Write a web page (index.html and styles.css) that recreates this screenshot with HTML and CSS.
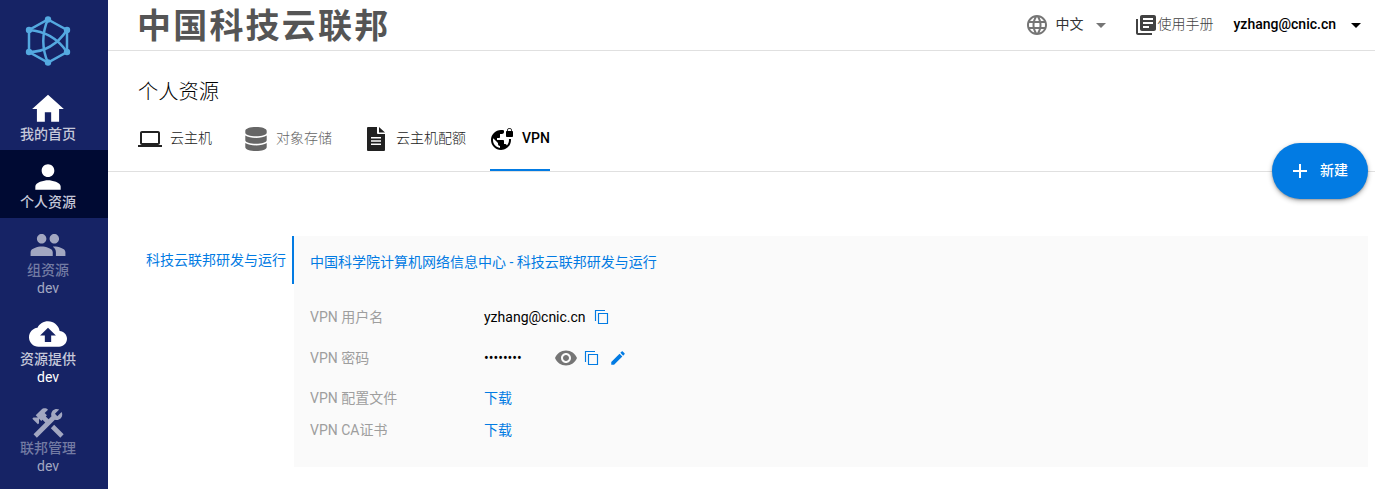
FILE: index.html
```html
<!DOCTYPE html>
<html lang="zh-CN">
<head>
<meta charset="utf-8">
<title>个人资源</title>
<link rel="stylesheet" href="styles.css">
</head>
<body>
<div class="app">
  <nav class="sidebar">
    <svg class="brand" viewBox="0 0 48 52">
      <path d="M24 4.500 43 15v22L24 47.500 5 37V15z"/>
      <path d="M5 15c16 1 29 9 38 22M24 4c-6 14-6 30 0 44M5 37c15 0 28-7 38-22"/>
      <g class="nodes"><circle cx="24" cy="4.500" r="3.200"/><circle cx="43" cy="15" r="3.200"/><circle cx="43" cy="37" r="3.200"/><circle cx="24" cy="47.500" r="3.200"/><circle cx="5" cy="37" r="3.200"/><circle cx="5" cy="15" r="3.200"/></g>
    </svg>
    <a class="nav-item"><svg viewBox="0 0 24 24"><path d="M10 20v-6h4v6h5v-8h3L12 3 2 12h3v8z"/></svg><span>我的首页</span></a>
    <a class="nav-item active"><svg viewBox="0 0 24 24"><path d="M12 12c2.210 0 4-1.790 4-4s-1.790-4-4-4-4 1.790-4 4 1.790 4 4 4zm0 2c-2.670 0-8 1.340-8 4v2h16v-2c0-2.660-5.330-4-8-4z"/></svg><span>个人资源</span></a>
    <a class="nav-item tall dim"><svg viewBox="0 0 24 24"><path d="M16 11c1.660 0 2.990-1.340 2.990-3S17.660 5 16 5s-3 1.340-3 3 1.340 3 3 3zm-8 0c1.660 0 2.990-1.340 2.990-3S9.660 5 8 5 5 6.340 5 8s1.340 3 3 3zm0 2c-2.330 0-7 1.170-7 3.500V19h14v-2.500c0-2.330-4.670-3.500-7-3.500zm8 0c-.29 0-.62.02-.97.05 1.160.84 1.970 1.970 1.970 3.450V19h6v-2.500c0-2.330-4.670-3.500-7-3.500z"/></svg><span>组资源</span><b>dev</b></a>
    <a class="nav-item tall"><svg viewBox="0 0 24 24"><path d="M19.350 10.040C18.670 6.590 15.640 4 12 4 9.110 4 6.600 5.640 5.350 8.040 2.340 8.360 0 10.910 0 14c0 3.310 2.690 6 6 6h13c2.760 0 5-2.240 5-5 0-2.640-2.050-4.780-4.650-4.960zM14 13v4h-4v-4H7l5-5 5 5h-3z"/></svg><span>资源提供</span><b>dev</b></a>
    <a class="nav-item tall dim"><svg viewBox="0 0 24 24"><path d="M13.780 15.300 19.780 21.300 21.890 19.140 15.890 13.140zM17.500 10.100C17.110 10.100 16.690 10.050 16.360 9.910L4.970 21.250 2.860 19.140 10.270 11.740 8.500 9.960 7.780 10.660 6.330 9.250V12.110L5.630 12.810 2.110 9.250 2.810 8.550H5.620L4.220 7.140 7.780 3.580C8.950 2.410 10.830 2.410 12 3.580L9.890 5.740 11.300 7.140 10.590 7.850 12.380 9.630 14.200 7.750C14.060 7.420 14 7 14 6.630 14 4.660 15.560 3.110 17.500 3.110 18.090 3.110 18.610 3.250 19.080 3.530L16.410 6.200 17.910 7.700 20.580 5.030C20.860 5.500 21 6 21 6.630 21 8.550 19.450 10.100 17.500 10.100z"/></svg><span>联邦管理</span><b>dev</b></a>
  </nav>
  <div class="page">
    <header class="topbar">
      <div class="wordmark">中国科技云联邦</div>
      <div class="lang">
        <svg class="globe" viewBox="0 0 24 24"><path d="M11.990 2C6.470 2 2 6.480 2 12s4.470 10 9.990 10C17.520 22 22 17.520 22 12S17.520 2 11.990 2zm6.930 6h-2.950c-.32-1.250-.78-2.450-1.380-3.560 1.840.63 3.370 1.910 4.330 3.560zM12 4.040c.83 1.200 1.480 2.530 1.910 3.960h-3.820c.43-1.430 1.080-2.760 1.910-3.960zM4.260 14C4.100 13.360 4 12.690 4 12s.1-1.360.26-2h3.380c-.08.66-.14 1.320-.14 2s.06 1.340.14 2H4.260zm.82 2h2.950c.32 1.250.78 2.450 1.380 3.560-1.840-.63-3.370-1.900-4.330-3.560zm2.950-8H5.080c.96-1.660 2.490-2.930 4.330-3.560C8.810 5.550 8.350 6.750 8.030 8zM12 19.960c-.83-1.200-1.480-2.530-1.910-3.960h3.820c-.43 1.430-1.080 2.760-1.910 3.960zM14.340 14H9.660c-.09-.66-.16-1.320-.16-2s.07-1.350.16-2h4.680c.09.65.16 1.320.16 2s-.07 1.340-.16 2zm.25 5.560c.6-1.110 1.060-2.310 1.380-3.560h2.950c-.96 1.650-2.490 2.930-4.330 3.560zM16.360 14c.08-.66.14-1.320.14-2s-.06-1.340-.14-2h3.380c.16.64.26 1.310.26 2s-.1 1.360-.26 2h-3.380z"/></svg>
        <span>中文</span>
        <svg class="caret" viewBox="0 0 24 24"><path d="M7 10l5 5 5-5z"/></svg>
      </div>
      <div class="manual">
        <svg viewBox="0 0 24 24"><path d="M4 6H2v14c0 1.100.9 2 2 2h14v-2H4V6zm16-4H8c-1.100 0-2 .9-2 2v12c0 1.100.9 2 2 2h12c1.100 0 2-.9 2-2V4c0-1.100-.9-2-2-2zm-1 9H9V9h10v2zm-4 4H9v-2h6v2zm4-8H9V5h10v2z"/></svg>
        <span>使用手册</span>
      </div>
      <div class="account"><span>yzhang@cnic.cn</span><svg viewBox="0 0 24 24"><path d="M7 10l5 5 5-5z"/></svg></div>
    </header>
    <section class="heading">
      <h1>个人资源</h1>
      <div class="tabs">
        <a class="tab"><svg viewBox="0 0 24 24"><path d="M20 18c1.100 0 1.990-.9 1.990-2L22 6c0-1.100-.9-2-2-2H4c-1.100 0-2 .9-2 2v10c0 1.100.9 2 2 2H0v2h24v-2h-4zM4 6h16v10H4V6z"/></svg><span>云主机</span></a>
        <a class="tab muted"><svg viewBox="0 0 24 24"><path d="M1.300 4v1.800c0 2.200 4.800 3.500 10.700 3.500s10.700-1.300 10.700-3.500V4C22.700 1.500 18 0 12 0S1.300 1.500 1.300 4zM1.300 8.600v4.600c0 2.100 4.800 3.500 10.700 3.500s10.700-1.400 10.700-3.500V8.600C20.500 10.200 16.200 10.900 12 10.900S3.500 10.200 1.300 8.600zM1.300 16v4.300C1.300 22.600 6.100 24 12 24s10.700-1.400 10.700-3.700V16c-2.200 1.600-6.500 2.400-10.700 2.400S3.500 17.600 1.300 16z"/></svg><span>对象存储</span></a>
        <a class="tab quota"><svg viewBox="0 0 24 24"><path d="M13 0H4a1 1 0 0 0-1 1v22a1 1 0 0 0 1 1h16a1 1 0 0 0 1-1V7h-7a1 1 0 0 1-1-1zM15 0v5.500h6zM7 10h10v1.500H7zm0 3.300h10v1.500H7zm0 3.200h10V18H7z" fill-rule="evenodd"/></svg><span>云主机配额</span></a>
        <a class="tab current"><svg viewBox="0 0 24 24"><path d="M22 4v-.5C22 2.120 20.880 1 19.500 1S17 2.120 17 3.500V4c-.55 0-1 .45-1 1v4c0 .55.45 1 1 1h5c.55 0 1-.45 1-1V5c0-.55-.45-1-1-1zm-.8 0h-3.400v-.5c0-.94.76-1.700 1.700-1.700s1.700.76 1.700 1.700V4zm-2.280 8c.04.33.08.66.08 1 0 2.080-.8 3.970-2.100 5.390-.26-.81-1-1.390-1.900-1.390h-1v-3c0-.55-.45-1-1-1H7v-2h2c.55 0 1-.45 1-1V7h2c1.100 0 2-.9 2-2V3.460c-.95-.3-1.950-.46-3-.46C5.480 3 1 7.480 1 13s4.480 10 10 10 10-4.480 10-10c0-.34-.02-.67-.05-1h-2.030zM10 20.930c-3.950-.49-7-3.850-7-7.930 0-.62.08-1.210.21-1.790L8 16v1c0 1.100.9 2 2 2v1.930z"/></svg><span>VPN</span></a>
      </div>
      <button class="create"><svg viewBox="0 0 24 24"><path d="M19 13h-6v6h-2v-6H5v-2h6V5h2v6h6v2z"/></svg><span>新建</span></button>
    </section>
    <main class="content">
      <div class="orgs"><a class="org">科技云联邦研发与运行</a></div>
      <div class="panel">
        <h2>中国科学院计算机网络信息中心 - 科技云联邦研发与运行</h2>
        <div class="row user"><label>VPN 用户名</label><span>yzhang@cnic.cn</span><svg class="copy" viewBox="0 0 16 16"><path d="M1.500 12V1.500H11M4.500 4.500h9v10h-9z"/></svg></div>
        <div class="row secret"><label>VPN 密码</label><span class="dots">••••••••</span><svg class="eye" viewBox="0 0 24 24"><path d="M12 4.500C7 4.500 2.730 7.610 1 12c1.730 4.390 6 7.500 11 7.500s9.270-3.110 11-7.500c-1.730-4.390-6-7.500-11-7.500zM12 17c-2.760 0-5-2.240-5-5s2.240-5 5-5 5 2.240 5 5-2.240 5-5 5zm0-8c-1.660 0-3 1.340-3 3s1.340 3 3 3 3-1.340 3-3-1.340-3-3-3z"/></svg><svg class="copy" viewBox="0 0 16 16"><path d="M1.500 12V1.500H11M4.500 4.500h9v10h-9z"/></svg><svg class="edit" viewBox="0 0 24 24"><path d="M3 17.250V21h3.750L17.810 9.940l-3.750-3.750L3 17.250zM20.710 7.040c.39-.39.39-1.020 0-1.410l-2.340-2.340c-.39-.39-1.020-.39-1.410 0l-1.830 1.830 3.750 3.750 1.830-1.830z"/></svg></div>
        <div class="row"><label>VPN 配置文件</label><a>下载</a></div>
        <div class="row"><label>VPN CA证书</label><a>下载</a></div>
      </div>
    </main>
  </div>
</div>
</body>
</html>
```

FILE: styles.css
```css
* { box-sizing: border-box; }
body { margin: 0; font: 14px/20px Roboto, "Noto Sans CJK SC", sans-serif; color: #000; background: #fff; overflow: hidden; }
svg { display: block; fill: currentColor; flex: none; }
.app { display: flex; height: 489px; }
.sidebar { width: 108px; flex: none; background: #162365; color: #fff; display: flex; flex-direction: column; overflow: hidden; }
.brand { width: 48px; height: 52px; margin: 15px 0 15px 24px; flex: none; fill: none; stroke: #54a9e0; stroke-width: 2.5; }
.nodes { fill: #54a9e0; stroke: none; }
.nav-item { height: 68px; flex: none; padding: 8px 12px 0 0; display: flex; flex-direction: column; align-items: center; line-height: 18px; }
.nav-item svg { width: 38px; height: 38px; margin-bottom: -3px; }
.nav-item span { color: #c5c8d9; font-weight: 500; }
.nav-item b { font-weight: 400; }
.nav-item.tall { height: 89px; }
.nav-item.active { background: #000a33; }
.nav-item.dim svg { color: #a2a7c1; }
.nav-item.dim span { color: #737ba3; }
.nav-item.dim b { color: #a2a7c1; }
.page { flex: 1; min-width: 0; }
.topbar { height: 51px; border-bottom: 1px solid #e0e0e0; display: flex; align-items: center; padding-left: 29px; }
.wordmark { font-size: 34px; line-height: 48px; padding-top: 2px; letter-spacing: 2.2px; font-weight: 700; color: #555; margin-right: auto; }
.lang { display: flex; align-items: center; margin-right: 21px; color: #333; }
.globe { width: 24px; height: 24px; color: #757575; margin-right: 7px; }
.caret { width: 24px; height: 24px; color: #757575; margin-left: 5px; }
.manual { display: flex; align-items: center; margin-right: 20px; color: #424242; font-weight: 300; }
.manual svg { width: 24px; height: 24px; }
.account { display: flex; align-items: center; font-weight: 500; gap: 8px; padding-right: 7px; }
.account svg { width: 24px; height: 24px; }
.account span, .manual span, .lang span { position: relative; top: -1px; }
.heading { position: relative; height: 121px; border-bottom: 1px solid #e0e0e0; padding: 27px 30px 0; display: flex; flex-direction: column; }
h1 { margin: 0; font-size: 20.3px; line-height: 28px; font-weight: 300; }
.tabs { display: flex; margin-top: 1px; height: 64px; }
.tab { display: flex; height: 64px; align-items: center; gap: 8px; color: #212121; margin-right: 32px; font-weight: 300; }
.tab svg { width: 24px; height: 24px; }
.tab span { padding-bottom: 2px; }
.tab.muted { color: #666; }
.tab.quota { margin-right: 24px; }
.tab.current { color: #000; font-weight: 500; border-bottom: 2px solid #027be3; padding-top: 2px; }
.create { position: absolute; right: 7px; bottom: -28px; width: 96px; height: 56px; border: 0; border-radius: 28px; background: #027be3; color: #fff; display: flex; align-items: center; padding: 0 16px; gap: 8px; font: 500 14px/20px Roboto, "Noto Sans CJK SC", sans-serif; box-shadow: 0 2px 5px rgba(0,0,0,.3), 0 1px 2px rgba(0,0,0,.2); }
.create svg { width: 24px; height: 24px; }
.create span { padding-bottom: 2px; }
.content { display: flex; padding: 64px 7px 0 38px; }
.orgs { width: 148px; flex: none; }
.org { display: block; height: 48px; line-height: 48px; color: #027be3; border-right: 2px solid #027be3; white-space: nowrap; }
.panel { flex: 1; height: 231px; background: #fafafa; padding: 16px; }
h2 { margin: 0 0 35px; font-size: 14px; line-height: 20px; font-weight: 400; color: #027be3; }
.row { display: flex; height: 32px; align-items: center; }
.row label { width: 174px; flex: none; color: #9e9e9e; }
.row a { color: #027be3; }
.row.user { height: 20px; }
.row.user .copy { margin-left: 8px; }
.row.secret { height: 42px; margin: 10px 0 3px; }
.copy { width: 16px; height: 16px; fill: none; stroke: #027be3; stroke-width: 1.15; }
.edit { width: 18px; height: 18px; color: #027be3; margin-left: 9px; }
.dots { width: 70px; }
.eye { width: 24px; height: 24px; color: #757575; margin-right: 6px; }
```
